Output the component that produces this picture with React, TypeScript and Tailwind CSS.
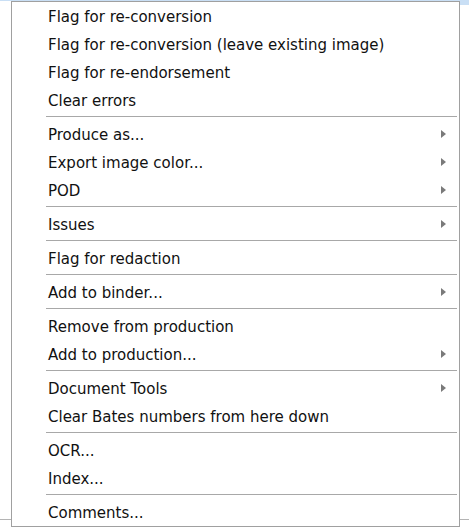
type Item = { label: string; sub?: boolean } | 'sep';

const items: Item[] = [
  { label: 'Flag for re-conversion' },
  { label: 'Flag for re-conversion (leave existing image)' },
  { label: 'Flag for re-endorsement' },
  { label: 'Clear errors' },
  'sep',
  { label: 'Produce as...', sub: true },
  { label: 'Export image color...', sub: true },
  { label: 'POD', sub: true },
  'sep',
  { label: 'Issues', sub: true },
  'sep',
  { label: 'Flag for redaction' },
  'sep',
  { label: 'Add to binder...', sub: true },
  'sep',
  { label: 'Remove from production' },
  { label: 'Add to production...', sub: true },
  'sep',
  { label: 'Document Tools', sub: true },
  { label: 'Clear Bates numbers from here down' },
  'sep',
  { label: 'OCR...' },
  { label: 'Index...' },
  'sep',
  { label: 'Comments...' },
];

function Arrow() {
  return (
    <svg width="5" height="8" viewBox="0 0 5 8" className="shrink-0">
      <path d="M0 0 L5 4 L0 8 Z" fill="#7a7a7a" />
    </svg>
  );
}

export default function App() {
  return (
    <div
      className="relative h-[531px] w-[469px] overflow-hidden bg-white"
      style={{ fontFamily: '"DejaVu Sans", Verdana, sans-serif' }}
    >
      {/* page behind the menu */}
      <div className="h-px w-full bg-[#c9dff5]" />
      <div className="absolute right-0 top-0 h-[5px] w-[10px] bg-[#c9dff5]" />
      <div className="absolute left-0 top-[519px] h-px w-full bg-[#b4b4b4]" />

      {/* context menu */}
      <div className="absolute left-[11px] top-px flex w-[449px] flex-col border border-[#a0a0a0] bg-white text-[15px] text-[#111]">
        {items.map((it, i) =>
          it === 'sep' ? (
            <div key={i} className="mb-[3px] ml-[34px] mr-[2px] mt-[2px] h-px bg-[#a8a8a8]" />
          ) : (
            <div key={i} className="flex h-[28px] items-center pl-[36px] pr-[13px]">
              <span className="flex-1 pt-[2px] leading-none">{it.label}</span>
              {it.sub && <Arrow />}
            </div>
          ),
        )}
      </div>
    </div>
  );
}
